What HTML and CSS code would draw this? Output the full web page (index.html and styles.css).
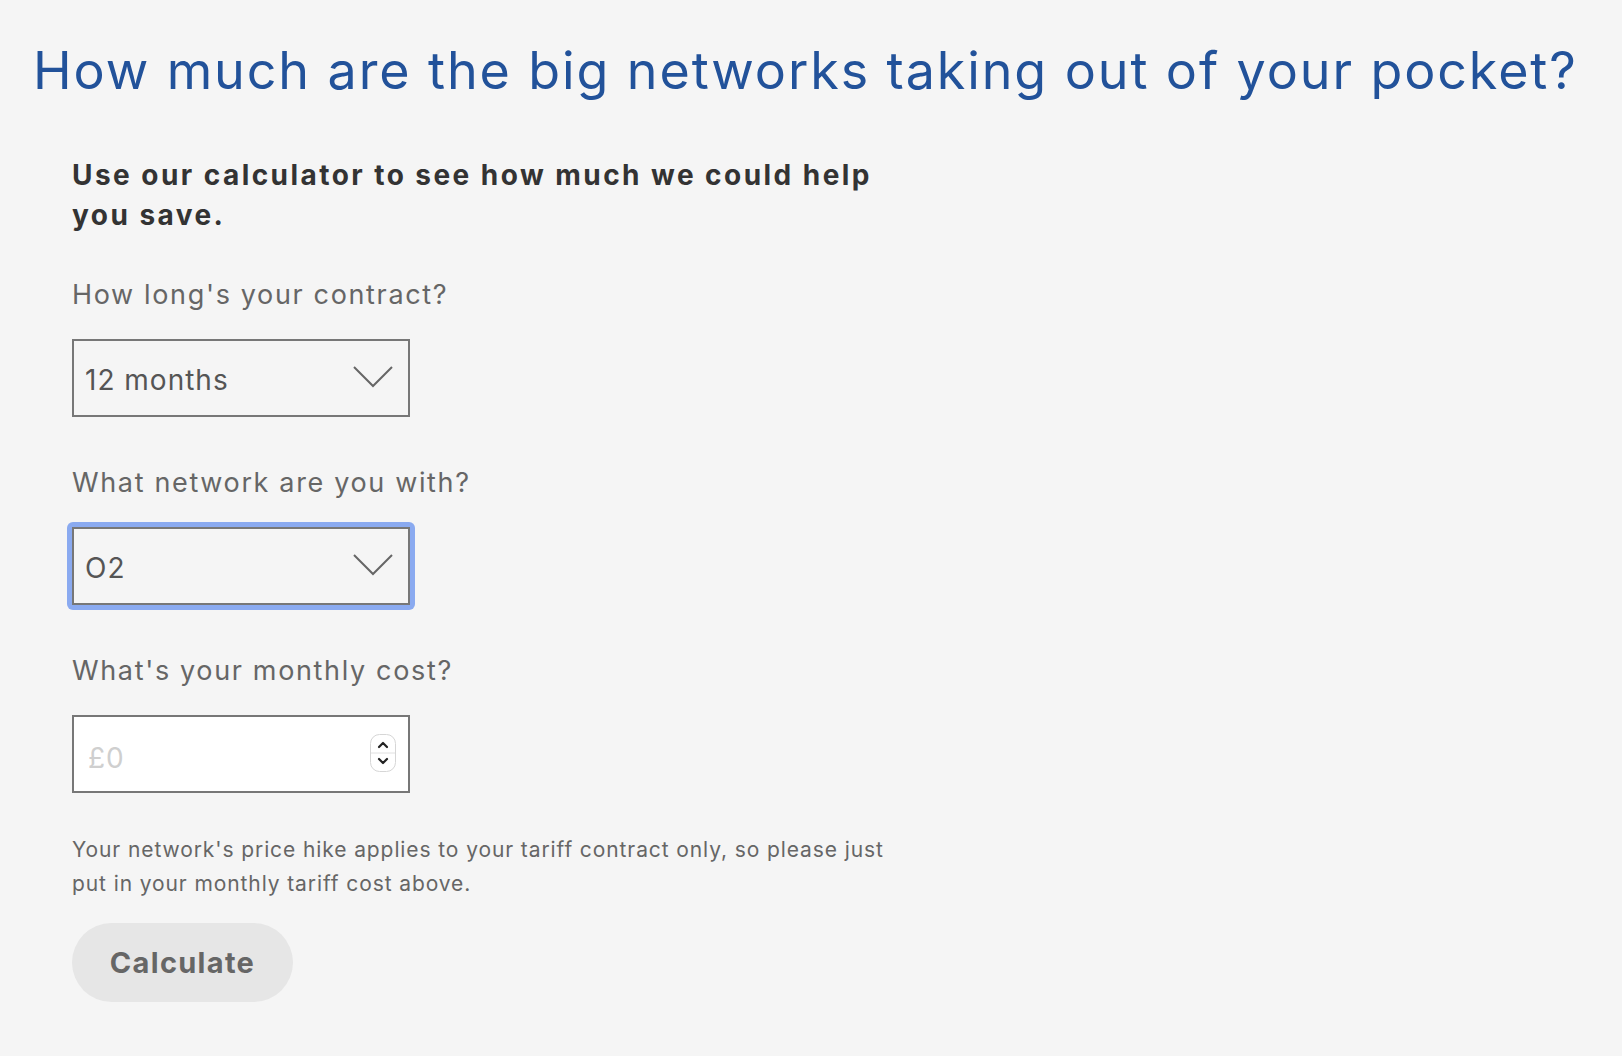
FILE: index.html
```html
<!DOCTYPE html>
<html lang="en">
<head>
<meta charset="utf-8">
<title>Price hike calculator</title>
<link rel="stylesheet" href="styles.css">
</head>
<body>
<main class="page">
  <h1 class="title">How much are the big networks taking out of your pocket?</h1>
  <form class="calc">
    <p class="intro">Use our calculator to see how much we could help you save.</p>

    <div class="field">
      <label class="label" for="length">How long's your contract?</label>
      <div class="select-wrap">
        <select id="length" class="select">
          <option>12 months</option>
          <option>24 months</option>
        </select>
        <svg class="chev" viewBox="0 0 40 22" width="40" height="22" aria-hidden="true"><path d="M1 1 L20 20 L39 1" fill="none" stroke="#666" stroke-width="2"/></svg>
      </div>
    </div>

    <div class="field">
      <label class="label" for="network">What network are you with?</label>
      <div class="select-wrap focused">
        <select id="network" class="select">
          <option>O2</option>
          <option>EE</option>
          <option>Vodafone</option>
        </select>
        <svg class="chev" viewBox="0 0 40 22" width="40" height="22" aria-hidden="true"><path d="M1 1 L20 20 L39 1" fill="none" stroke="#666" stroke-width="2"/></svg>
      </div>
    </div>

    <div class="field">
      <label class="label" for="cost">What's your monthly cost?</label>
      <div class="input-wrap">
        <input id="cost" class="input" type="text" placeholder="£0">
        <span class="spinner" aria-hidden="true">
          <svg viewBox="0 0 26 38" width="26" height="38">
            <rect x="0.5" y="0.5" width="25" height="37" rx="9" fill="#fff" stroke="#d6d6d6"/>
            <line x1="1" y1="19" x2="25" y2="19" stroke="#e0e0e0"/>
            <path d="M9 13 L13 9 L17 13" fill="none" stroke="#222" stroke-width="2.2" stroke-linecap="round" stroke-linejoin="round"/>
            <path d="M9 25 L13 29 L17 25" fill="none" stroke="#222" stroke-width="2.2" stroke-linecap="round" stroke-linejoin="round"/>
          </svg>
        </span>
      </div>
    </div>

    <p class="note">Your network's price hike applies to your tariff contract only, so please just put in your monthly tariff cost above.</p>

    <button type="button" class="btn">Calculate</button>
  </form>
</main>
</body>
</html>
```

FILE: styles.css
```css
html, body {
  margin: 0;
  padding: 0;
  background: #f5f5f5;
}
body {
  font-family: "Inter", "Noto Sans", sans-serif;
  color: #333;
}
.page {
  padding: 39px 33px 0 33px;
}
.title {
  margin: 0;
  font-family: "Inter", sans-serif;
  font-weight: 400;
  font-size: 52px;
  line-height: 64px;
  letter-spacing: 1.9px;
  color: #22529a;
}
.calc {
  display: flex;
  flex-direction: column;
  align-items: flex-start;
  margin: 52px 0 0 39px;
  width: 830px;
}
.intro {
  margin: 0;
  font-size: 28px;
  font-weight: 700;
  line-height: 40px;
  letter-spacing: 2.45px;
  color: #333;
}
.field {
  display: flex;
  flex-direction: column;
  margin-top: 48px;
}
.intro + .field {
  margin-top: 42px;
}
.label {
  display: block;
  font-size: 27px;
  line-height: 36px;
  letter-spacing: 1.65px;
  color: #666;
}
.select-wrap,
.input-wrap {
  position: relative;
  margin-top: 26px;
  width: 338px;
  height: 78px;
  box-sizing: border-box;
}
.select-wrap.focused {
  border-radius: 2px;
  box-shadow: 0 0 0 5px #8aaaf0;
}
.select,
.input {
  appearance: none;
  -webkit-appearance: none;
  display: block;
  width: 100%;
  height: 100%;
  box-sizing: border-box;
  border: 2px solid #777;
  border-radius: 0;
  background: #f5f5f5;
  padding: 3px 0 0 11px;
  font-family: "Inter", sans-serif;
  font-size: 28px;
  letter-spacing: 1px;
  color: #555;
  outline: none;
}
.input {
  background: #fff;
  padding: 7px 0 0 14px;
}
.input::placeholder {
  color: #cfcfcf;
}
.chev {
  position: absolute;
  right: 17px;
  top: 27px;
  pointer-events: none;
}
.spinner {
  position: absolute;
  right: 14px;
  top: 19px;
  display: block;
  line-height: 0;
}
.note {
  margin: 40px 0 0 0;
  font-size: 21px;
  line-height: 34px;
  letter-spacing: 0.9px;
  color: #666;
}
.btn {
  margin-top: 22px;
  width: 221px;
  height: 79px;
  border: none;
  border-radius: 40px;
  background: #e6e6e6;
  font-family: "Inter", sans-serif;
  font-size: 29px;
  font-weight: 700;
  letter-spacing: 1.3px;
  color: #666;
  cursor: pointer;
}
```
